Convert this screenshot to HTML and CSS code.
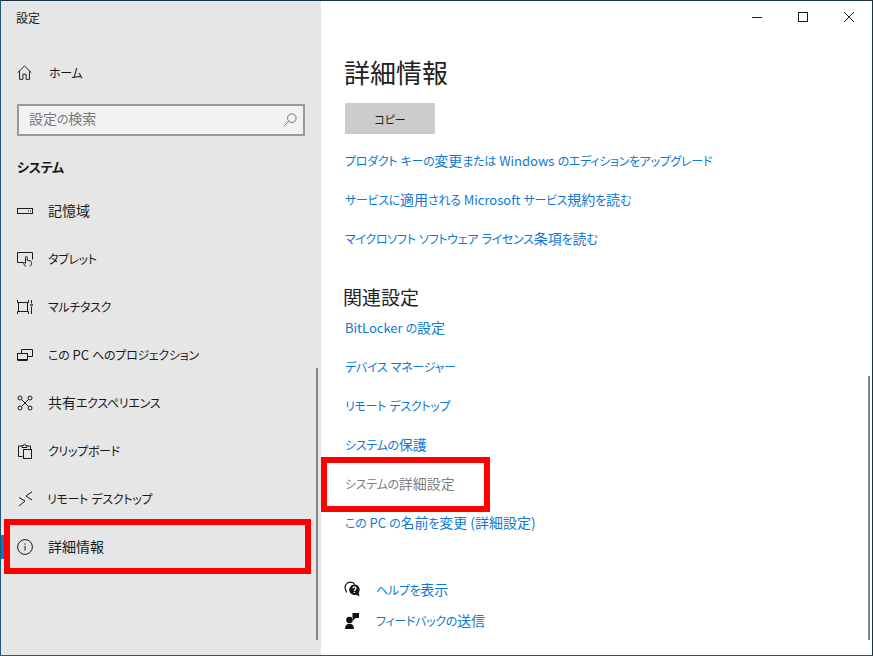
FILE: index.html
```html
<!DOCTYPE html>
<html lang="ja">
<head>
<meta charset="utf-8">
<title>設定</title>
<link rel="stylesheet" href="styles.css">
</head>
<body>
<div class="window">
  <aside class="side">
    <div class="app-title">設定</div>
    <a class="nav home"><svg class="ico" viewBox="0 0 16 16"><path d="M.7 8.200 8 1l7.300 7.200M2.700 6.500v8.800h3.600V9.800h3.400v5.500h3.600V6.500"/></svg><span class="k">ホーム</span></a>
    <div class="search"><span>設定<span class="k">の</span>検索</span><svg class="search-ico" viewBox="0 0 14 14"><circle cx="8.800" cy="5.200" r="4.300"/><path d="M5.700 8.300.8 13.200"/></svg></div>
    <div class="group"><span class="k">システム</span></div>
    <a class="nav"><svg class="ico" viewBox="0 0 16 16"><rect x=".5" y="5.500" width="15" height="5"/><path d="M11 8h1M13 8h1"/></svg><span>記憶域</span></a>
    <a class="nav"><svg class="ico" viewBox="0 0 16 16"><path d="M6 11.500H.5v-10h15v7"/><path d="M8.500 15.500 6.500 12.500c-.5-1 .5-1.500 1.200-.8l.8.8V6.300c0-1.200 1.800-1.200 1.800 0v3l3 .6c1 .2 1.200 1 1.200 1.800 0 1.500-.6 3-1.500 3.800"/></svg><span class="k">タブレット</span></a>
    <a class="nav"><svg class="ico" viewBox="0 0 16 16"><path d="M.5 1v2.500h11V1M.5 15v-2.500h11V15M1.500 3.500v9M10.500 3.500v9M14.500 1v3M14.500 8v7"/><circle cx="14.500" cy="6" r="1"/></svg><span class="k">マルチタスク</span></a>
    <a class="nav"><svg class="ico" viewBox="0 0 16 16"><path d="M4.500 6.500v-4h11v7h-5"/><rect x=".5" y="6.500" width="10" height="6"/><path d="M.5 13.500h10"/></svg><span><span class="k">この</span> <span class="lat">PC</span> <span class="k">へのプロジェクション</span></span></a>
    <a class="nav"><svg class="ico" viewBox="0 0 16 16"><circle cx="3" cy="3" r="2"/><circle cx="13" cy="3" r="2"/><circle cx="3" cy="13" r="2"/><circle cx="13" cy="13" r="2"/><path d="m4.500 4.500 7 7M11.500 4.500l-7 7"/></svg><span>共有<span class="k">エクスペリエンス</span></span></a>
    <a class="nav"><svg class="ico" viewBox="0 0 16 16"><path d="M5.500 13.500H1.500V3H5M10 3h3.500v3"/><path d="M5 4.500V2.500h1.500C6.500 .8 8.500 .8 8.500 2.500H10v2z"/><rect x="6.500" y="6.500" width="8" height="9"/></svg><span class="k">クリップボード</span></a>
    <a class="nav remote"><svg class="ico" viewBox="0 0 16 16"><path d="m2 6.500 6 3.500-6 5M15 .8 9 5l6 4"/></svg><span class="k">リモート デスクトップ</span></a>
    <a class="nav active"><svg class="ico" viewBox="0 0 16 16"><circle cx="8" cy="8" r="7.400"/><path d="M8 7v4.500M8 4.300v1.400"/></svg><span>詳細情報</span></a>
    <div class="side-bar"></div>
  </aside>
  <main class="main">
    <div class="caption">
      <svg viewBox="0 0 10 10"><path d="M0 5.500h10"/></svg>
      <svg viewBox="0 0 10 10"><rect x=".5" y=".5" width="9" height="9"/></svg>
      <svg viewBox="0 0 10 10"><path d="m0 0 10 10M10 0 0 10"/></svg>
    </div>
    <h1>詳細情報</h1>
    <button class="copy">コピー</button>
    <div class="links first">
      <a><span class="k">プロダクト キーの</span>変更<span class="k">または</span> <span class="lat">Windows</span> <span class="k">のエディションをアップグレード</span></a>
      <a><span class="k">サービスに</span>適用<span class="k">される</span> <span class="lat">Microsoft</span> <span class="k">サービス</span>規約<span class="k">を</span>読<span class="k">む</span></a>
      <a><span class="k">マイクロソフト ソフトウェア ライセンス</span>条項<span class="k">を</span>読<span class="k">む</span></a>
    </div>
    <h2>関連設定</h2>
    <div class="links">
      <a><span class="lat">BitLocker</span> <span class="k">の</span>設定</a>
      <a><span class="k">デバイス マネージャー</span></a>
      <a><span class="k">リモート デスクトップ</span></a>
      <a><span class="k">システムの</span>保護</a>
      <a class="off"><span class="k">システムの</span>詳細設定</a>
      <a><span class="k">この</span> <span class="lat">PC</span> <span class="k">の</span>名前<span class="k">を</span>変更 (詳細設定)</a>
    </div>
    <div class="help">
      <a><svg viewBox="0 0 16 16"><path class="thin" d="M2.500 11.500 2 9.500C-.5 5.500 2.500 1 6.500 1.200c2 .1 3.500 1 4.200 2.300"/><path class="solid" d="M10.500 3.500a5.300 5.300 0 1 0 1.800 10.300l3.200 1.700-.8-3.500a5.300 5.300 0 0 0-4.200-8.500z"/><path class="q" d="M8.800 7.300c.2-1.800 3.200-1.800 3.200 0 0 1.300-1.600 1.200-1.600 2.600M10.400 10.800v1.200"/></svg><span><span class="k">ヘルプを</span>表示</span></a>
      <a><svg viewBox="0 0 16 16"><circle class="solid" cx="5.500" cy="8" r="3.300"/><path class="solid" d="M1 17c0-3.500 2-5.200 4.500-5.200S10 13.500 10 17zM8.500 1h6.500v5h-3.500L9 8.500V6H8.500z"/></svg><span><span class="k">フィードバックの</span>送信</span></a>
    </div>
    <div class="main-bar"></div>
  </main>
  <div class="mark mark-nav"></div>
  <div class="mark mark-link"></div>
</div>
</body>
</html>
```
FILE: styles.css
```css
* { box-sizing: border-box; }
html, body { margin: 0; height: 100%; }
body { font-family: "Noto Sans CJK JP", "Noto Sans", sans-serif; font-size: 14px; font-feature-settings: "palt"; color: #1a1a1a; background: #fff; overflow: hidden; }
.k { font-size: 12px; letter-spacing: -.3px; word-spacing: 1px; }
.lat { font-size: 13px; }
.window { position: relative; width: 873px; height: 656px; display: flex; border: 1px solid #1c5a75; border-top-color: #1b3345; border-right-color: #1b3345; overflow: hidden; }
.side { position: relative; width: 320px; flex: none; background: #e6e6e6; display: flex; flex-direction: column; }
.app-title { height: 48px; padding: 8px 0 0 15px; font-size: 12px; line-height: 18px; }
.nav { height: 48px; padding-left: 16px; display: flex; align-items: center; gap: 15px; flex: none; }
.nav span { line-height: 20px; position: relative; top: -1px; }
.nav span span, .nav > .k { top: 0; }
.ico { width: 16px; height: 16px; flex: none; fill: none; stroke: #1a1a1a; stroke-width: 1; }
.home { height: 47px; gap: 17px; }
.home .ico { width: 15px; height: 15px; }
.search { width: 288px; height: 32px; margin: 8px 0 0 16px; border: 2px solid #999; background: #f2f2f2; display: flex; align-items: center; justify-content: space-between; padding: 0 6px 4px 10px; color: #777; flex: none; }
.search-ico { width: 14px; height: 14px; margin-top: 4px; fill: none; stroke: #777; stroke-width: 1; }
.group { height: 47px; padding: 19px 0 0 16px; line-height: 22px; font-weight: 700; flex: none; }
.group .k { font-size: 13px; letter-spacing: -.3px; }
.group + .nav { margin-top: 4px; }
.remote { gap: 14px; }
.active { position: relative; }
.active::before { content: ""; position: absolute; left: 0; top: 12px; width: 4px; height: 24px; background: #0078d4; }
.side-bar { position: absolute; left: 315px; top: 367px; width: 2px; height: 272px; background: #858585; }
.main { position: relative; flex: 1; padding-left: 23px; display: flex; flex-direction: column; }
.caption { position: absolute; top: 11px; right: 18px; display: flex; gap: 36px; }
.caption svg { width: 10px; height: 10px; fill: none; stroke: #1a1a1a; stroke-width: 1; overflow: visible; }
h1 { margin: 51px 0 0; font-size: 26px; font-weight: 400; line-height: 40px; color: #222; font-feature-settings: normal; }
.copy { width: 90px; height: 31px; margin: 11px 0 0 1px; padding: 0; border: 0; background: #ccc; font: inherit; font-size: 11px; font-feature-settings: "palt"; color: #1a1a1a; }
.links { display: flex; flex-direction: column; margin-left: 1px; }
.links a { height: 39px; line-height: 39px; color: #0f78d4; white-space: nowrap; }
.links.first { margin-top: 7px; }
h2 { margin: 26px 0 0 -1px; font-size: 19px; font-weight: 400; line-height: 26px; color: #222; }
h2 + .links { margin-top: -2px; }
.links a.off { color: #808080; }
.help { margin-top: 37px; display: flex; flex-direction: column; gap: 11px; }
.help a { height: 20px; display: flex; align-items: center; gap: 16px; color: #0f78d4; line-height: 20px; }
.help svg { width: 16px; height: 16px; flex: none; overflow: visible; }
.solid { fill: #111; }
.thin { fill: none; stroke: #111; stroke-width: 1.200; }
.q { fill: none; stroke: #fff; stroke-width: 1.300; }
.main-bar { position: absolute; right: 2px; top: 375px; width: 2px; height: 264px; background: #858585; }
.mark { position: absolute; border: 6px solid #f00; }
.mark-nav { left: 3px; top: 518px; width: 307px; height: 55px; }
.mark-link { left: 320px; top: 456px; width: 169px; height: 55px; }
```
